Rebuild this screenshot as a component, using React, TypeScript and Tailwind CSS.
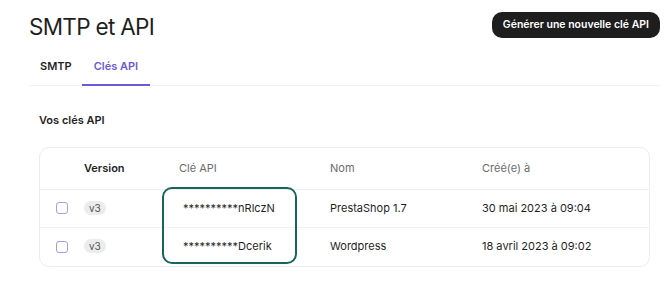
import React from 'react';

const keys = [
  { version: 'v3', key: '**********nRlczN', name: 'PrestaShop 1.7', created: '30 mai 2023 à 09:04' },
  { version: 'v3', key: '**********Dcerik', name: 'Wordpress', created: '18 avril 2023 à 09:02' },
];

const App: React.FC = () => {
  return (
    <div
      className="relative w-[670px] h-[287px] overflow-hidden bg-white text-[#1f1f1f]"
      style={{ fontFamily: 'Inter, "Noto Sans", sans-serif' }}
    >
      {/* Page header */}
      <div className="flex items-start justify-between pl-[29px] pr-[10px] pt-[12px]">
        <h1 className="text-[22.5px] leading-[30px] font-normal tracking-[-0.7px]">SMTP et API</h1>
        <button className="h-[26px] px-[11px] rounded-[10px] bg-[#1e1e1e] text-white text-[10.5px] font-semibold">
          Générer une nouvelle clé API
        </button>
      </div>

      {/* Tabs */}
      <div className="mt-[16px] ml-[29px] mr-[10px] flex border-b border-[#f1f1f1]">
        <div className="pl-[11px] pr-[10px] pb-[10px] text-[11px] font-semibold">SMTP</div>
        <div className="px-[12px] pb-[9px] text-[11px] font-semibold text-[#6c5ad6] border-b-2 border-[#6c5ad6] -mb-px">
          Clés API
        </div>
      </div>

      {/* Section */}
      <div className="ml-[39px] mr-[20px] mt-[27px]">
        <h2 className="text-[11px] font-semibold leading-[14px]">Vos clés API</h2>

        <div className="mt-[20px] rounded-[10px] border border-[#ececec] text-[11px]">
          <div className="flex items-center h-[42px] border-b border-[#eeeeee] pl-[16px] pt-[1px]">
            <div className="w-[28px]" />
            <div className="w-[95px] font-semibold">Version</div>
            <div className="w-[151px] text-[#6b6b6b]">Clé API</div>
            <div className="w-[152px] text-[#6b6b6b]">Nom</div>
            <div className="text-[#6b6b6b]">Créé(e) à</div>
          </div>
          {keys.map((row, i) => (
            <div
              key={row.key}
              className={`flex items-center h-[38px] pl-[16px] ${i === 0 ? 'border-b border-[#f0f0f0]' : ''}`}
            >
              <div className="w-[28px]">
                <div className="w-[12px] h-[12px] rounded-[3px] border border-[#a89be6]" />
              </div>
              <div className="w-[95px]">
                <span className="inline-block rounded-full bg-[#ececec] px-[5px] text-[10px] leading-[14px] text-[#555]">
                  {row.version}
                </span>
              </div>
              <div className="w-[151px] pl-[4px]">{row.key}</div>
              <div className="w-[152px]">{row.name}</div>
              <div>{row.created}</div>
            </div>
          ))}
        </div>
      </div>

      {/* Highlight around the key column */}
      <div className="absolute left-[162px] top-[187px] w-[135px] h-[77px] rounded-[10px] border-2 border-[#17665e]" />
    </div>
  );
};

export default App;
